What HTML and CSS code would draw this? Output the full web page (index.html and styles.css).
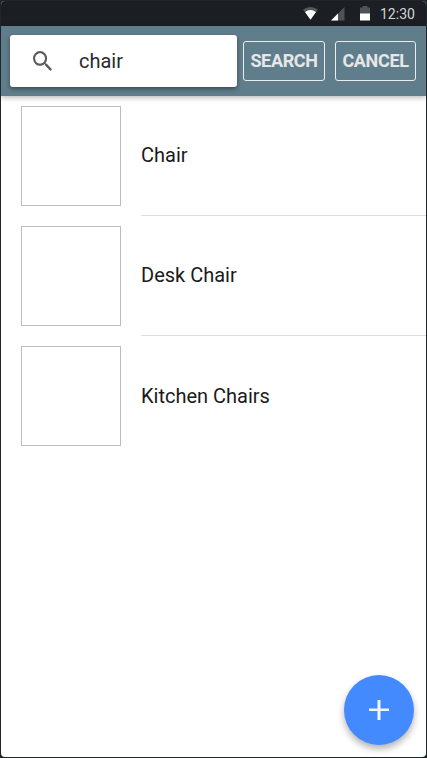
FILE: index.html
```html
<!DOCTYPE html>
<html lang="en">
<head>
<meta charset="utf-8">
<title>Search</title>
<link rel="stylesheet" href="styles.css">
</head>
<body>
<div class="screen">
  <div class="status">
    <svg class="wifi" width="16" height="15" viewBox="0 0 16 15"><path d="M0 3.500Q7.500 -1.700 15 3.500L7.500 13.500Z" fill="#55585b"/><path d="M2 6Q7.500 2 13 6L7.500 13.700Z" fill="#fff"/></svg>
    <svg class="signal" width="14" height="14" viewBox="0 0 14 14"><path d="M0 13.500L13.500 0V13.500Z" fill="#505356"/><path d="M0 13.500L7 6.500V13.500Z" fill="#fff"/></svg>
    <svg class="battery" width="10" height="15" viewBox="0 0 10 15"><path d="M0 1.500H2.500V0H7.500V1.500H10V8H0Z" fill="#505356"/><path d="M0 7.500H10V14.500H0Z" fill="#fff"/></svg>
    <span class="time">12:30</span>
  </div>
  <header class="toolbar">
    <div class="searchbox">
      <svg width="19" height="20" viewBox="3 3 17.500 17.500" preserveAspectRatio="none"><path fill="#5b5b5b" d="M15.500 14h-.79l-.28-.27A6.471 6.471 0 0 0 16 9.500 6.500 6.500 0 1 0 9.500 16c1.610 0 3.090-.59 4.230-1.570l.27.28v.79l5 4.990L20.490 19l-4.990-5zm-6 0C7.010 14 5 11.990 5 9.500S7.010 5 9.500 5 14 7.010 14 9.500 11.990 14 9.500 14z"/></svg>
      <span>chair</span>
    </div>
    <button class="btn search">SEARCH</button>
    <button class="btn cancel">CANCEL</button>
  </header>
  <main class="list">
    <div class="item"><div class="thumb"></div><div class="label">Chair</div></div>
    <div class="item"><div class="thumb"></div><div class="label">Desk Chair</div></div>
    <div class="item"><div class="thumb"></div><div class="label">Kitchen Chairs</div></div>
  </main>
  <button class="fab" aria-label="Add"><svg width="20" height="20" viewBox="0 0 20 20"><path d="M8.500 0H11.500V8.500H20V11H11.500V20H8.500V11H0V8.500H8.500Z" fill="#f2f6ff"/></svg></button>
</div>
</body>
</html>
```
FILE: styles.css
```css
* { box-sizing: border-box; }
body {
  margin: 0;
  padding: 1px;
  height: 758px;
  overflow: hidden;
  background: #20242b;
  font-family: Roboto, sans-serif;
}
.screen {
  position: relative;
  height: 756px;
  overflow: hidden;
  border-radius: 4px;
  background: #fff;
}
.status {
  display: flex;
  height: 25px;
  background: #1b1e23;
  padding-left: 302px;
}
.status svg { display: block; flex: none; }
.wifi { margin-top: 5px; }
.signal { margin: 6px 0 0 12px; }
.battery { margin: 5px 0 0 15px; }
.time {
  margin-left: 10px;
  font-size: 14px;
  line-height: 26px;
  color: #d4d5d7;
}
.toolbar {
  display: flex;
  align-items: flex-start;
  height: 70px;
  padding: 9px 10px 0 9px;
  background: #607d8b;
  box-shadow: 0 2px 5px rgba(0, 0, 0, .26);
}
.searchbox {
  display: flex;
  align-items: center;
  width: 227px;
  height: 52px;
  padding-left: 23px;
  gap: 27px;
  border-radius: 3px;
  background: #fff;
  box-shadow: 0 2px 4px rgba(0, 0, 0, .4);
  font-size: 20px;
  color: #2a2a2a;
}
.btn {
  height: 40px;
  margin-top: 6px;
  padding: 0;
  border: 1px solid #e9edef;
  border-radius: 3px;
  background: none;
  color: #e5e7e8;
  font: 700 18px/38px Roboto, sans-serif;
  letter-spacing: -.35px;
}
.search { width: 82px; margin-left: 6px; }
.cancel { width: 81px; margin-left: 10px; }
.item { display: flex; height: 120px; padding: 10px 0 0 20px; }
.thumb { width: 100px; height: 100px; border: 1px solid #bdbdbd; }
.label {
  flex: 1;
  height: 110px;
  margin-left: 20px;
  padding-bottom: 10px;
  border-bottom: 1px solid #dedede;
  font-size: 20px;
  line-height: 99px;
  color: #1a1a1a;
}
.item:last-child .label { border-bottom: 0; line-height: 100px; }
.fab {
  position: absolute;
  left: 343px;
  top: 674px;
  display: grid;
  place-items: center;
  width: 70px;
  height: 70px;
  padding: 0;
  border: 0;
  border-radius: 50%;
  background: #448aff;
  box-shadow: 0 4px 7px rgba(0, 0, 0, .3);
}
```
